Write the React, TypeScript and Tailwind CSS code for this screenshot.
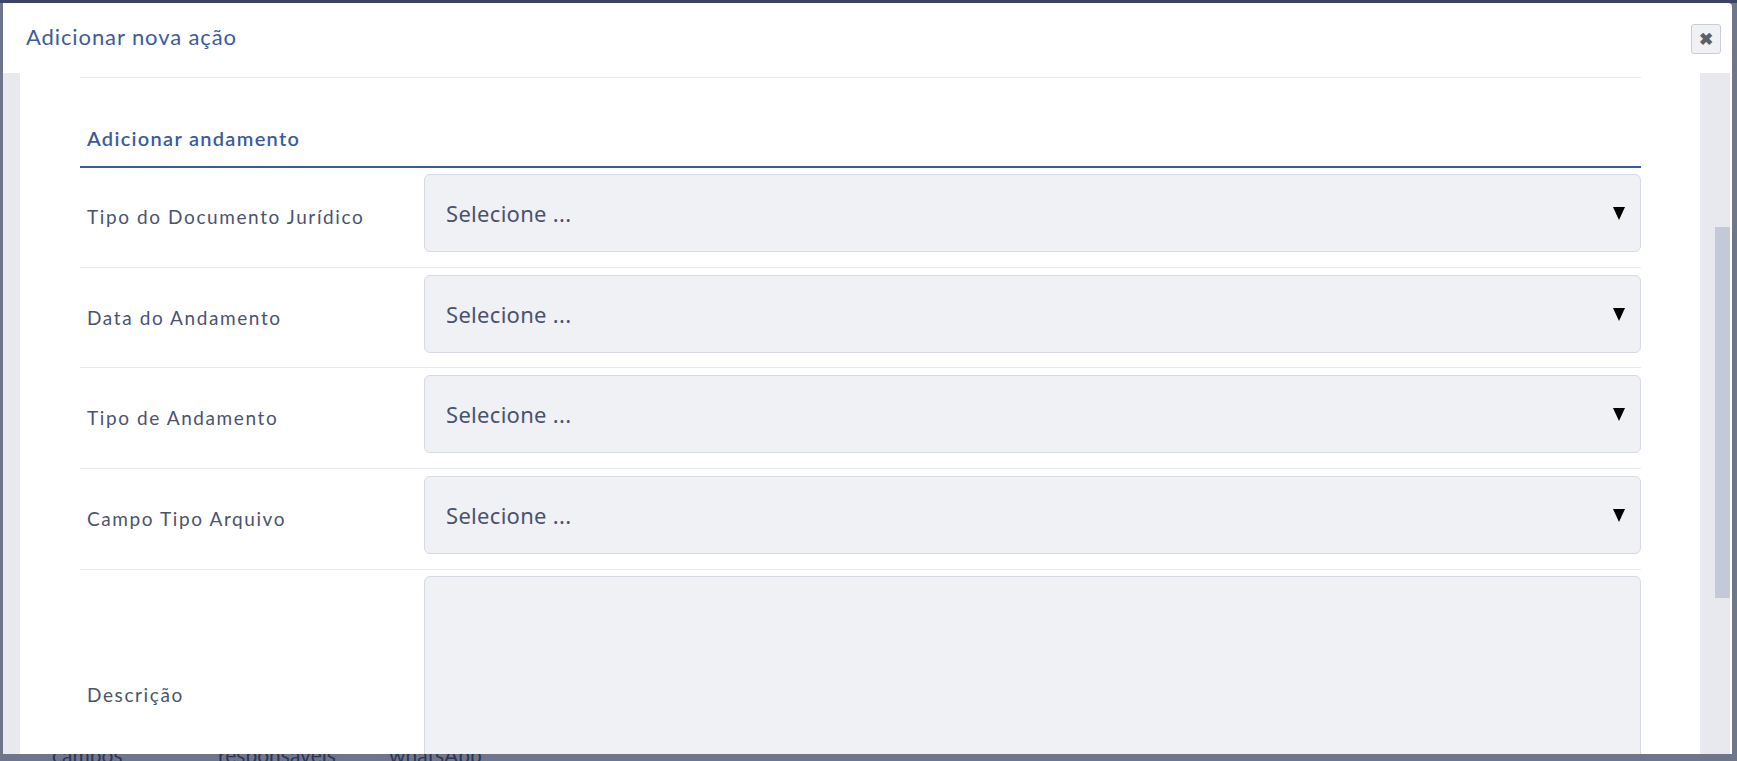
import React from "react";

const rows = [
  { label: "Tipo do Documento Jurídico", pt: "pt-[6px]", pb: "pb-[15px]" },
  { label: "Data do Andamento", pt: "pt-[7px]", pb: "pb-[14px]" },
  { label: "Tipo de Andamento", pt: "pt-[7px]", pb: "pb-[15px]" },
  { label: "Campo Tipo Arquivo", pt: "pt-[7px]", pb: "pb-[15px]" },
];

function SelectBox() {
  return (
    <div className="flex h-[78px] items-center justify-between rounded-[6px] border border-[#d6d9e2] bg-[#f0f1f5] pl-[21px] pr-[15px]">
      <span className="text-[22px] tracking-[0.3px] text-[#4a5270] [font-family:'Noto_Sans',sans-serif]">Selecione ...</span>
      <svg width="12" height="13" viewBox="0 0 12 13">
        <polygon points="0,0 12,0 6,13" fill="#000" />
      </svg>
    </div>
  );
}

export default function App() {
  return (
    <div className="relative h-[761px] w-[1737px] overflow-hidden bg-[#6f768a] [font-family:Lato,sans-serif]">
      {/* page behind the modal */}
      <div className="h-[3px] w-full bg-[#3b4463]" />
      <div className="absolute bottom-[-9px] left-[52px] flex text-[21px] text-[#2d3550]">
        <span className="w-[166px]">campos</span>
        <span className="w-[171px]">responsaveis</span>
        <span>whatsApp</span>
      </div>

      {/* modal */}
      <div className="absolute left-[3px] top-[3px] flex h-[751px] w-[1729px] flex-col rounded-tr-[4px] bg-white">
        <div className="flex h-[70px] items-center justify-between pl-[23px] pr-[11px]">
          <h1 className="mb-[4px] text-[22px] tracking-[0.9px] text-[#3d5b9a]">Adicionar nova ação</h1>
          <button className="mt-[2px] flex h-[30px] w-[30px] items-center justify-center rounded-[3px] border border-[#c9cdd9] bg-[#f0f1f5] text-[17px] font-bold text-[#5b5f6b]">
            ✖
          </button>
        </div>

        <div className="flex min-h-0 flex-1">
          <div className="w-[17px] bg-[#e8e9ef]" />
          <div className="flex-1 overflow-hidden bg-white pl-[60px] pr-[59px] pt-[4px]">
            <div className="border-t border-[#e9eaee]" />
            <div className="flex h-[90px] items-end border-b-2 border-[#3d5b9a] pb-[13px] pl-[7px]">
              <h2 className="text-[20px] font-semibold tracking-[1.3px] text-[#3d5b9a]">Adicionar andamento</h2>
            </div>
            {rows.map((r) => (
              <div key={r.label} className={`flex border-b border-[#e9eaee] ${r.pt} ${r.pb}`}>
                <div className="flex w-[344px] items-center pl-[7px] pt-[8px] text-[19px] tracking-[1.6px] text-[#4b5370]">
                  {r.label}
                </div>
                <div className="flex-1">
                  <SelectBox />
                </div>
              </div>
            ))}
            <div className="flex pt-[6px]">
              <div className="flex w-[344px] items-center pl-[7px] pt-[38px] text-[19px] tracking-[1.6px] text-[#4b5370]">
                Descrição
              </div>
              <div className="h-[200px] flex-1 rounded-[6px] border border-[#d6d9e2] bg-[#f0f1f5]" />
            </div>
          </div>
          <div className="w-[15px] bg-[#e8e9ef]" />
          <div className="flex w-[15px] flex-col bg-[#e8e9ef]">
            <div className="h-[154px]" />
            <div className="h-[371px] bg-[#c3c9d8]" />
          </div>
          <div className="w-[2px] bg-white" />
        </div>
      </div>
    </div>
  );
}
